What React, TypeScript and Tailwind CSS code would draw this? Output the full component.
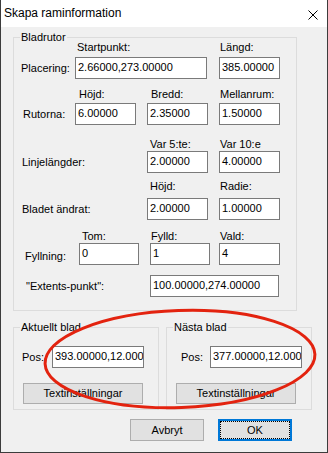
import React from "react";

function Box({ w, children }: { w: string; children?: React.ReactNode }) {
  return (
    <div className={`${w} h-[22px] shrink-0 bg-white border border-[#7a7a7a] pl-[2px] leading-[18px] overflow-hidden whitespace-nowrap`}>
      {children}
    </div>
  );
}

function Group({
  title,
  className,
  children,
}: {
  title: string;
  className: string;
  children?: React.ReactNode;
}) {
  return (
    <div className={`border border-[#dcdcdc] shrink-0 ${className}`}>
      <div className="-mt-[7px] -mb-[6px] ml-[6px] h-[13px] w-fit px-[1px] bg-[#f0f0f0] relative">
        {title}
      </div>
      {children}
    </div>
  );
}

function Btn({ children, className }: { children: React.ReactNode; className: string }) {
  return (
    <div className={`bg-[#e1e1e1] border border-[#adadad] flex items-center justify-center ${className}`}>
      {children}
    </div>
  );
}

export default function App() {
  return (
    <div className="relative w-[328px] h-[453px] bg-[#f0f0f0] border-x border-b border-[#3c3c3c] font-['Liberation_Sans',Arial,sans-serif] text-[11px] leading-[13px] text-black overflow-hidden">
      {/* Title bar */}
      <div className="h-[27px] bg-white flex items-center justify-between pl-[3px] pr-[9px]">
        <span className="text-[12px] leading-[15px]">Skapa raminformation</span>
        <svg className="mt-[2px]" width="10" height="10" viewBox="0 0 10 10">
          <path d="M0.5 0.5 L9.5 9.5 M9.5 0.5 L0.5 9.5" stroke="#000" strokeWidth="1" fill="none" />
        </svg>
      </div>

      <div className="pl-[12px] flex flex-col">
        {/* Bladrutor */}
        <Group title="Bladrutor" className="mt-[10px] w-[284px] h-[274px]">
          {/* Row 1 */}
          <div className="flex mt-[3px] h-[13px]">
            <div className="w-[61px]" />
            <div className="w-[132px] pl-[2px]">Startpunkt:</div>
            <div className="w-[12px]" />
            <div className="pl-[1px]">Längd:</div>
          </div>
          <div className="flex items-center mt-[3px] h-[22px]">
            <div className="w-[61px] pl-[7px]">Placering:</div>
            <Box w="w-[132px]">2.66000,273.00000</Box>
            <div className="w-[12px]" />
            <Box w="w-[61px]">385.00000</Box>
          </div>

          {/* Row 2 */}
          <div className="flex mt-[9px] h-[13px]">
            <div className="w-[61px]" />
            <div className="w-[72px] pl-[4px]">Höjd:</div>
            <div className="w-[72px] pl-[4px]">Bredd:</div>
            <div className="pl-[1px]">Mellanrum:</div>
          </div>
          <div className="flex items-center mt-[2px] h-[22px]">
            <div className="w-[61px] pl-[9px]">Rutorna:</div>
            <Box w="w-[61px]">6.00000</Box>
            <div className="w-[11px]" />
            <Box w="w-[61px]">2.35000</Box>
            <div className="w-[11px]" />
            <Box w="w-[61px]">1.50000</Box>
          </div>

          {/* Row 3 */}
          <div className="flex mt-[13px] h-[13px]">
            <div className="w-[133px]" />
            <div className="w-[72px] pl-[3px]">Var 5:te:</div>
            <div className="pl-[1px]">Var 10:e</div>
          </div>
          <div className="flex items-center h-[22px]">
            <div className="w-[133px] pl-[8px]">Linjelängder:</div>
            <Box w="w-[61px]">2.00000</Box>
            <div className="w-[11px]" />
            <Box w="w-[61px]">4.00000</Box>
          </div>

          {/* Row 4 */}
          <div className="flex mt-[7px] h-[13px]">
            <div className="w-[133px]" />
            <div className="w-[72px] pl-[3px]">Höjd:</div>
            <div className="pl-[1px]">Radie:</div>
          </div>
          <div className="flex items-center mt-[5px] h-[22px]">
            <div className="w-[133px] pl-[8px]">Bladet ändrat:</div>
            <Box w="w-[61px]">2.00000</Box>
            <div className="w-[11px]" />
            <Box w="w-[61px]">1.00000</Box>
          </div>

          {/* Row 5 */}
          <div className="flex mt-[10px] h-[13px]">
            <div className="w-[65px]" />
            <div className="w-[71px] pl-[3px]">Tom:</div>
            <div className="w-[69px] pl-[1px]">Fylld:</div>
            <div className="pl-[1px]">Vald:</div>
          </div>
          <div className="flex items-center h-[22px]">
            <div className="w-[65px] pl-[11px] pt-[5px]">Fyllning:</div>
            <Box w="w-[60px]">0</Box>
            <div className="w-[11px]" />
            <Box w="w-[60px]">1</Box>
            <div className="w-[9px]" />
            <Box w="w-[61px]">4</Box>
          </div>

          {/* Row 6 */}
          <div className="flex items-center mt-[10px] h-[22px]">
            <div className="w-[136px] pl-[12px]">"Extents-punkt":</div>
            <Box w="w-[129px]">100.00000,274.00000</Box>
          </div>
        </Group>

        {/* Bottom groups */}
        <div className="flex mt-[16px]">
          <Group title="Aktuellt blad" className="w-[146px] h-[83px]">
            <div className="flex items-center mt-[18px] h-[22px]">
              <div className="w-[38px] pl-[8px]">Pos:</div>
              <Box w="w-[92px]">393.00000,12.000</Box>
            </div>
            <Btn className="mt-[15px] ml-[9px] w-[120px] h-[21px]">Textinställningar</Btn>
          </Group>
          <Group title="Nästa blad" className="ml-[7px] w-[146px] h-[83px]">
            <div className="flex items-center mt-[18px] h-[22px]">
              <div className="w-[43px] pl-[14px]">Pos:</div>
              <Box w="w-[92px]">377.00000,12.000</Box>
            </div>
            <Btn className="mt-[15px] ml-[9px] w-[120px] h-[21px]">Textinställningar</Btn>
          </Group>
        </div>

        {/* Dialog buttons */}
        <div className="flex mt-[9px]">
          <Btn className="ml-[117px] w-[74px] h-[22px]">Avbryt</Btn>
          <div className="ml-[14px] w-[74px] h-[22px] border-2 border-[#0078d7] bg-[#e1e1e1] flex">
            <div className="flex-1 border border-dotted border-black flex items-center justify-center">OK</div>
          </div>
        </div>
      </div>

      {/* Red annotation ellipse */}
      <svg
        className="absolute left-0 top-0 pointer-events-none"
        width="328"
        height="453"
        viewBox="0 0 328 453"
      >
        <ellipse
          cx="179"
          cy="359"
          rx="135"
          ry="48.5"
          transform="rotate(-2 179 359)"
          fill="none"
          stroke="#e3230f"
          strokeWidth="3"
        />
      </svg>
    </div>
  );
}
